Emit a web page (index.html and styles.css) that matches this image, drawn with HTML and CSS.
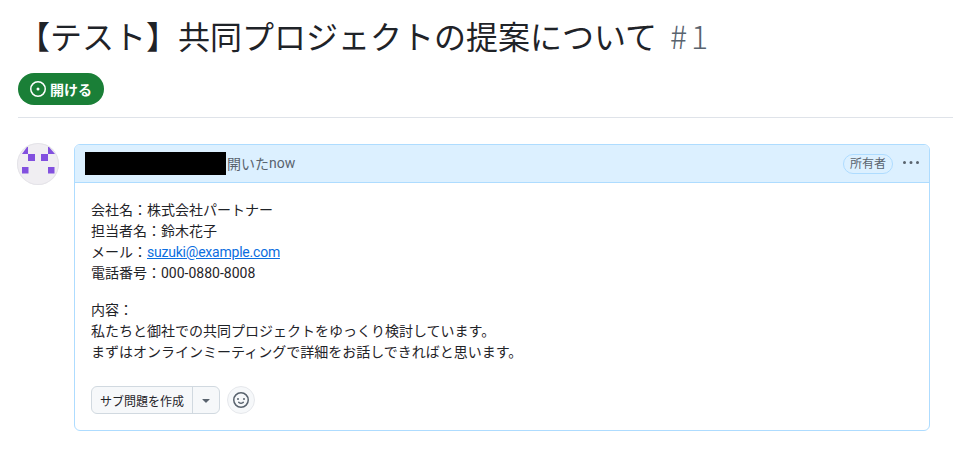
FILE: index.html
```html
<!DOCTYPE html>
<html lang="ja">
<head>
<meta charset="utf-8">
<title>Issue</title>
<link rel="stylesheet" href="styles.css">
</head>
<body>
<main class="page">
  <header class="issue-head">
    <h1 class="title">【テスト】共同プロジェクトの提案について <span class="num">#1</span></h1>
    <span class="state">
      <svg class="state-icon" viewBox="0 0 16 16" width="16" height="16" aria-hidden="true"><path fill="currentColor" d="M8 9.5a1.5 1.5 0 1 0 0-3 1.5 1.5 0 0 0 0 3Z"/><path fill="currentColor" d="M8 0a8 8 0 1 1 0 16A8 8 0 0 1 8 0ZM1.5 8a6.5 6.5 0 1 0 13 0 6.5 6.5 0 0 0-13 0Z"/></svg>
      開ける
    </span>
  </header>
  <section class="timeline">
    <div class="avatar">
      <svg viewBox="0 0 42 42" width="42" height="42" aria-hidden="true"><g fill="#8250df"><path d="M5 11 10 4h1v7Z"/><path d="M31 4h1l6 7h-7Z"/><rect x="11" y="11" width="7" height="7"/><rect x="24" y="11" width="7" height="7"/><rect x="5" y="24" width="6.5" height="6.5"/><rect x="31" y="24" width="6.5" height="6.5"/></g></svg>
    </div>
    <article class="comment">
      <div class="comment-head">
        <div class="meta">
          <span class="redacted"></span>
          <span class="action">開いた</span><span class="when">now</span>
        </div>
        <div class="head-actions">
          <span class="owner">所有者</span>
          <svg class="kebab" viewBox="0 0 16 16" width="16" height="16" aria-hidden="true"><path fill="currentColor" d="M8 9a1.5 1.5 0 1 0 0-3 1.5 1.5 0 0 0 0 3ZM1.5 9a1.5 1.5 0 1 0 0-3 1.5 1.5 0 0 0 0 3Zm13 0a1.5 1.5 0 1 0 0-3 1.5 1.5 0 0 0 0 3Z"/></svg>
        </div>
      </div>
      <div class="comment-body">
        <p class="para">会社名：株式会社パートナー<br>担当者名：鈴木花子<br>メール：<a class="link" href="#">suzuki@example.com</a><br>電話番号：000-0880-8008</p>
        <p class="para">内容：<br>私たちと御社での共同プロジェクトをゆっくり検討しています。<br>まずはオンラインミーティングで詳細をお話しできればと思います。</p>
        <div class="actions">
          <div class="split">
            <span class="split-main">サブ問題を作成</span>
            <span class="split-caret"><svg viewBox="0 0 16 16" width="16" height="16" aria-hidden="true"><path fill="currentColor" d="m4.427 7.427 3.396 3.396a.25.25 0 0 0 .354 0l3.396-3.396A.25.25 0 0 0 11.396 7H4.604a.25.25 0 0 0-.177.427Z"/></svg></span>
          </div>
          <span class="react"><svg viewBox="0 0 16 16" width="16" height="16" aria-hidden="true"><path fill="currentColor" d="M8 0a8 8 0 1 1 0 16A8 8 0 0 1 8 0ZM1.5 8a6.5 6.5 0 1 0 13 0 6.5 6.5 0 0 0-13 0Zm3.82 1.636a.75.75 0 0 1 1.038.175l.007.009c.103.118.22.222.35.31.264.178.683.37 1.285.37.602 0 1.02-.192 1.285-.371.13-.088.247-.192.35-.31l.007-.008a.75.75 0 0 1 1.222.87l-.022-.015c.02.013.021.015.021.015v.001l-.001.002-.002.003-.005.007-.014.019a2.066 2.066 0 0 1-.184.213c-.16.166-.338.316-.53.445-.63.418-1.37.638-2.127.629-.946 0-1.652-.308-2.126-.63a3.331 3.331 0 0 1-.715-.657l-.014-.02-.005-.006-.002-.003v-.002h-.001l.613-.432-.614.43a.75.75 0 0 1 .183-1.044ZM12 7a1 1 0 1 1-2 0 1 1 0 0 1 2 0ZM5 8a1 1 0 1 1 0-2 1 1 0 0 1 0 2Zm5.25 2.25.592.416a97.71 97.71 0 0 0-.592-.416Z"/></svg></span>
        </div>
      </div>
    </article>
  </section>
</main>
</body>
</html>
```
FILE: styles.css
```css
* { box-sizing: border-box; }
html, body { margin: 0; padding: 0; background: #fff; }
body {
  font-family: Roboto, "Noto Sans CJK JP", sans-serif;
  color: #1f2328;
  font-size: 14px;
  overflow: hidden;
}
.page { padding-left: 18px; }
.issue-head {
  padding: 16px 0 12px;
  border-bottom: 1px solid #dfe3e9;
  margin-bottom: 26px;
}
.title {
  margin: 0 0 13px;
  height: 44px;
  font-size: 32px;
  line-height: 44px;
  font-weight: 400;
  color: #1f2328;
  word-spacing: 5px;
}
.num {
  color: #59636e;
  font-family: "Noto Sans CJK JP", sans-serif;
  font-weight: 300;
  letter-spacing: 4px;
  line-height: 1;
}
.state {
  display: flex;
  width: fit-content;
  align-items: center;
  gap: 4px;
  height: 32px;
  padding: 0 12px;
  border-radius: 16px;
  background: #1a7f37;
  color: #fff;
  font-size: 14px;
  font-weight: 700;
}
.timeline {
  display: flex;
  gap: 15px;
  align-items: flex-start;
  margin-left: -1px;
  margin-right: 23px;
}
.avatar {
  width: 42px;
  height: 42px;
  flex: none;
  margin-top: -1px;
  border-radius: 50%;
  background: #f0eef2;
  box-shadow: inset 0 0 0 1px #e4e3e8;
  overflow: hidden;
}
.avatar svg { display: block; }
.comment {
  flex: 1;
  border: 1px solid #aedcff;
  border-radius: 6px;
  overflow: hidden;
}
.comment-head {
  display: flex;
  align-items: center;
  justify-content: space-between;
  height: 38px;
  padding: 0 10px;
  background: #dcf0ff;
  border-bottom: 1px solid #aedcff;
  color: #59636e;
}
.meta { display: flex; align-items: center; }
.redacted { width: 141px; height: 23px; background: #000; margin-right: 1px; }
.action, .when { padding-bottom: 2px; }
.head-actions { display: flex; align-items: center; gap: 10px; }
.owner {
  height: 20px;
  padding: 0 6px 2px;
  display: inline-flex;
  align-items: center;
  border: 1px solid #aedcff;
  border-radius: 10px;
  font-size: 12px;
  font-weight: 400;
}
.kebab { color: #59636e; margin-bottom: 2px; }
.comment-body { padding: 17px 16px 16px; }
.para { margin: 0 0 16px; line-height: 21px; }
.link { color: #0b6ee0; text-decoration: underline; letter-spacing: -0.22px; }
.actions { display: flex; align-items: center; gap: 7px; margin-top: 23px; }
.split {
  display: flex;
  height: 28px;
  border: 1px solid #d1d9e0;
  border-radius: 6px;
  background: #f6f8fa;
  font-size: 12px;
  font-weight: 400;
}
.split-main { display: flex; align-items: center; padding: 0 8px; }
.split-caret {
  display: flex;
  align-items: center;
  justify-content: center;
  width: 27px;
  border-left: 1px solid #d1d9e0;
  color: #59636e;
}
.react {
  width: 28px;
  height: 28px;
  border-radius: 50%;
  border: 1px solid #e6e8ec;
  background: #f6f8fa;
  color: #59636e;
  display: flex;
  align-items: center;
  justify-content: center;
}
```
